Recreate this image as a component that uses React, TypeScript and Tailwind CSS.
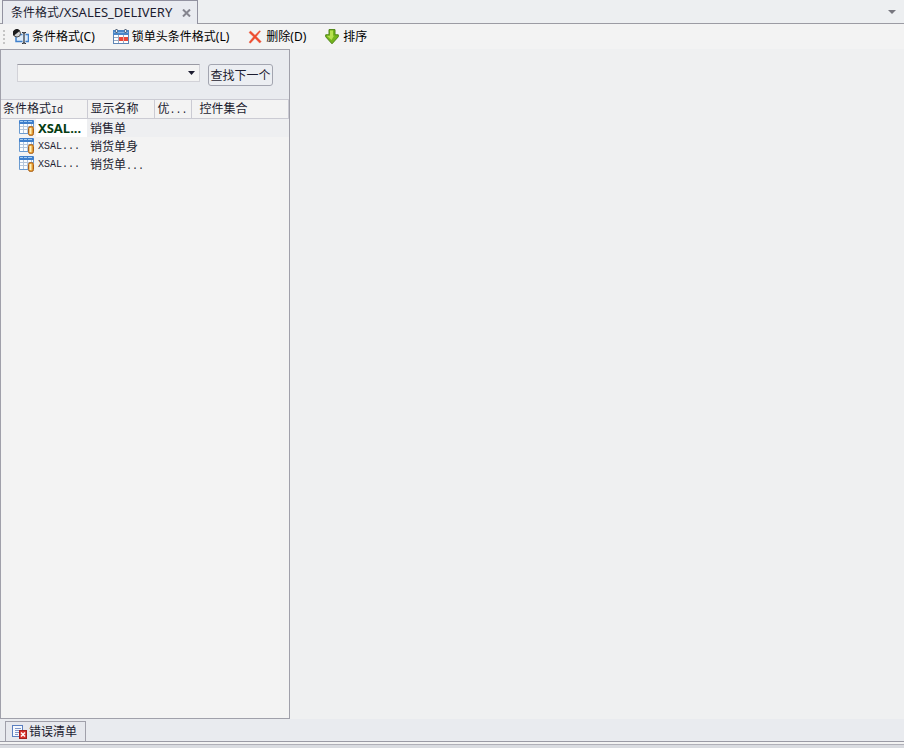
import React from "react";

function TableIcon() {
  return (
    <svg width="16" height="16" viewBox="0 0 16 16" className="block shrink-0" aria-hidden="true">
      <rect x="0" y="0" width="15" height="14" rx="1" fill="#fbfdff" />
      <path d="M4.500 4v9M8.500 4v9M12.500 4v5M1 6.500h14M1 9.500h10" stroke="#b4c6dc" />
      <path d="M0.500 3v10.500H9M14.500 3v4" fill="none" stroke="#6b9bd0" />
      <rect x="0" y="0" width="15" height="4" rx="1" fill="#3f7fcc" />
      <path d="M1 1.500h3M5 1.500h3M9 1.500h4" stroke="#a4cdf3" />
      <rect x="9.500" y="6.500" width="5" height="9" rx="2" fill="#e39a30" stroke="#a8601c" />
      <path d="M11.500 8v6" stroke="#fff0b8" strokeWidth="2" />
    </svg>
  );
}

function FormatIcon() {
  return (
    <svg width="16" height="16" viewBox="0 0 16 16" className="block shrink-0" aria-hidden="true">
      <rect x="3" y="6" width="12" height="6.500" fill="#dcebfa" />
      <path d="M3 7v5.500h6.500M12.500 12.500h3v-7h-3M9.500 5.500H7" fill="none" stroke="#3f80cc" strokeWidth="1.500" />
      <circle cx="4" cy="4.500" r="3.500" fill="#d4d4d4" stroke="#4a4a4a" />
      <path d="M.700 6.800A4 4 0 0 1 7 1.700Z" fill="#1c1c1c" />
      <path d="M9 3.500h1l1 1 1-1h1M11 4v10M9 14.500h1l1-1 1 1h1" fill="none" stroke="#2c333d" strokeWidth="1.200" />
    </svg>
  );
}

function CalendarIcon() {
  return (
    <svg width="16" height="16" viewBox="0 0 16 16" className="block shrink-0" aria-hidden="true">
      <rect x="0.500" y="1.500" width="15" height="13" fill="#fff" stroke="#5f86b6" />
      <rect x="0" y="1" width="16" height="5" rx="1" fill="#4a86c8" />
      <path d="M1 3.500h14" stroke="#86b5e5" />
      <path d="M3.500 0v4M12.500 0v4" stroke="#58667a" strokeWidth="2" />
      <path d="M3.500 1v2M12.500 1v2" stroke="#e8eef5" />
      <path d="M5.500 6v8M10.500 6v8M1 8.500h14M1 11.500h14" stroke="#9aabc2" />
      <rect x="6" y="8" width="9" height="4" fill="#e8483a" />
      <path d="M10.500 8v4" stroke="#f7a79e" />
    </svg>
  );
}

function DeleteIcon() {
  return (
    <svg width="14" height="14" viewBox="0 0 14 14" className="block shrink-0" aria-hidden="true">
      <path d="M1 2.500 2.500 1 7 5.300 11.500.7l1 .6L8.300 6.600l4.900 5-1.500 1.500L7 8.200l-4.600 5-1.400-1 4.500-5.400Z" fill="#f0492c" stroke="#e5694d" strokeWidth=".5" />
    </svg>
  );
}

function SortIcon() {
  return (
    <svg width="14" height="16" viewBox="0 0 14 16" className="block shrink-0" aria-hidden="true">
      <path d="M4 .6h6v5.200h3.300v2L7 14.800.7 7.800v-2H4Z" fill="#74b51c" stroke="#4e8414" />
      <path d="M5 1.600h3v5.200h1L6.500 11 2 7V6.800h3Z" fill="#b7e04f" />
    </svg>
  );
}

function ErrorListIcon() {
  return (
    <svg width="16" height="16" viewBox="0 0 16 16" className="block shrink-0" aria-hidden="true">
      <rect x="0.500" y="1.500" width="10" height="11" fill="#f5f8fd" stroke="#5a7fc0" />
      <path d="M3 4.500h6M3 6.500h5M3 8.500h4M3 10.500h3" stroke="#7f97c8" />
      <rect x="7.500" y="6.500" width="7" height="8" fill="#d8332c" stroke="#a51d1d" />
      <path d="M9 8.500l4 4M13 8.500l-4 4" stroke="#fff" strokeWidth="1.500" />
    </svg>
  );
}

const commands = [
  { label: "条件格式(C)", icon: <FormatIcon /> },
  { label: "锁单头条件格式(L)", icon: <CalendarIcon /> },
  { label: "删除(D)", icon: <DeleteIcon /> },
  { label: "排序", icon: <SortIcon /> },
];

const rows = [
  { name: "销售单", cut: false, selected: true },
  { name: "销货单身", cut: false, selected: false },
  { name: "销货单", cut: true, selected: false },
];

function Dots() {
  return <span className="font-['Liberation_Mono',monospace] text-[10px] leading-none">...</span>;
}

export default function App() {
  return (
    <div className="flex min-h-screen flex-col bg-[#eff0f1] font-['Noto_Sans','Noto_Sans_CJK_SC',sans-serif] text-xs text-[#1c1c30]">
      <header className="flex h-6 items-stretch border-b border-[#9b9ba3] bg-[#edeff1] pl-0.5">
        <div className="-mb-px flex items-center gap-2.5 border border-b-0 border-[#9292a0] bg-[#e9ebf0] pr-1.5 pl-2">
          <span className="whitespace-nowrap">
            条件格式<span className="text-[13px] leading-4">/XSALES_DELIVERY</span>
          </span>
          <button aria-label="关闭" className="block">
            <svg width="9" height="8" viewBox="0 0 9 8" className="block" aria-hidden="true">
              <path d="M1 .5l7 7M8 .5l-7 7" stroke="#85858f" strokeWidth="2" />
            </svg>
          </button>
        </div>
        <button aria-label="窗口列表" className="mr-2 ml-auto">
          <svg width="8" height="4" viewBox="0 0 8 4" className="block" aria-hidden="true">
            <path d="M0 0h8L4 4Z" fill="#77777f" />
          </svg>
        </button>
      </header>

      <nav className="flex h-[25px] items-center bg-[#f3f3f3] pl-[3px] text-black">
        <svg width="2" height="14" viewBox="0 0 2 14" className="mr-2 block" aria-hidden="true">
          <path d="M0 0h2v2H0zM0 4h2v2H0zM0 8h2v2H0zM0 12h2v2H0z" fill="#c5c5c5" />
        </svg>
        <div className="flex items-center gap-[18px]">
          {commands.map((c) => (
            <button key={c.label} className="flex items-center gap-[3px] whitespace-nowrap">
              <span className="flex w-4 justify-center">{c.icon}</span>
              {c.label}
            </button>
          ))}
        </div>
      </nav>

      <main className="flex flex-1">
        <aside className="flex w-[290px] flex-col border border-[#a0a0aa] bg-[#f3f3f3]">
          <div className="flex h-[49px] items-start gap-2 bg-[#e9ebef] px-4 pt-3.5">
            <div className="relative flex-1">
              <select
                aria-label="查找"
                className="block h-[18px] w-full appearance-none border border-[#d2d2d8] border-t-[#9a9aa4] bg-[#f3f3f3] px-1"
              />
              <svg width="7" height="4" viewBox="0 0 7 4" className="pointer-events-none absolute top-[7px] right-[5px]" aria-hidden="true">
                <path d="M0 0h7L3.500 4Z" fill="#1c1c30" />
              </svg>
            </div>
            <button className="h-[22px] w-[65px] rounded-[3px] border border-[#a3a5b0] bg-[#eceef2] pt-0.5 whitespace-nowrap">
              查找下一个
            </button>
          </div>
          <table className="w-full table-fixed border-collapse text-left leading-4">
            <colgroup>
              <col className="w-[86px]" />
              <col className="w-[67px]" />
              <col className="w-[37px]" />
              <col />
            </colgroup>
            <thead>
              <tr className="h-[19px] border-y border-[#cbcbd3] whitespace-nowrap">
                <th className="border-r border-[#cbcbd3] p-0 pl-0.5 font-normal">
                  条件格式<span className="font-['Liberation_Mono',monospace] text-[10px] leading-none">Id</span>
                </th>
                <th className="border-r border-[#cbcbd3] p-0 pl-[3px] font-normal">显示名称</th>
                <th className="border-r border-[#cbcbd3] p-0 pl-[3px] font-normal">优<Dots /></th>
                <th className="border-r border-[#cbcbd3] p-0 pl-2 font-normal">控件集合</th>
              </tr>
            </thead>
            <tbody>
              {rows.map((r) => (
                <tr key={r.name + r.cut} className="h-[18px] whitespace-nowrap">
                  <td className="p-0 pl-[18px]">
                    <div className="flex h-[18px] items-center">
                      <TableIcon />
                      {r.selected ? (
                        <span className="ml-px flex-1 bg-white pl-0.5 text-[13px] leading-[18px] font-bold text-[#063d12]">XSAL...</span>
                      ) : (
                        <span className="pt-0.5 pl-[3px] font-['Liberation_Mono',monospace] text-[10px]">XSAL...</span>
                      )}
                    </div>
                  </td>
                  <td className={r.selected ? "bg-[#eeeff1] p-0 pt-0.5 pl-[3px]" : "p-0 pt-0.5 pl-[3px]"}>
                    {r.name}
                    {r.cut && <Dots />}
                  </td>
                  <td className={r.selected ? "bg-[#eeeff1] p-0" : "p-0"} />
                  <td className={r.selected ? "bg-[#eeeff1] p-0" : "p-0"} />
                </tr>
              ))}
            </tbody>
          </table>
        </aside>
        <section className="flex-1 bg-[#eff0f1]" />
      </main>

      <footer className="bg-[#e9ebef] pt-0.5">
        <div className="flex border-b border-[#9b9ba5] pl-[5px]">
          <button className="flex h-5 items-center gap-px border border-b-0 border-[#a0a0aa] bg-[#e6e8ed] pr-2 pl-1.5 whitespace-nowrap">
            <ErrorListIcon />
            错误清单
          </button>
        </div>
        <div className="h-0.5 bg-[#f3f3f3]" />
        <div className="h-1 border-t border-[#b0b0b8] bg-[#d9dbe0]" />
      </footer>
    </div>
  );
}
